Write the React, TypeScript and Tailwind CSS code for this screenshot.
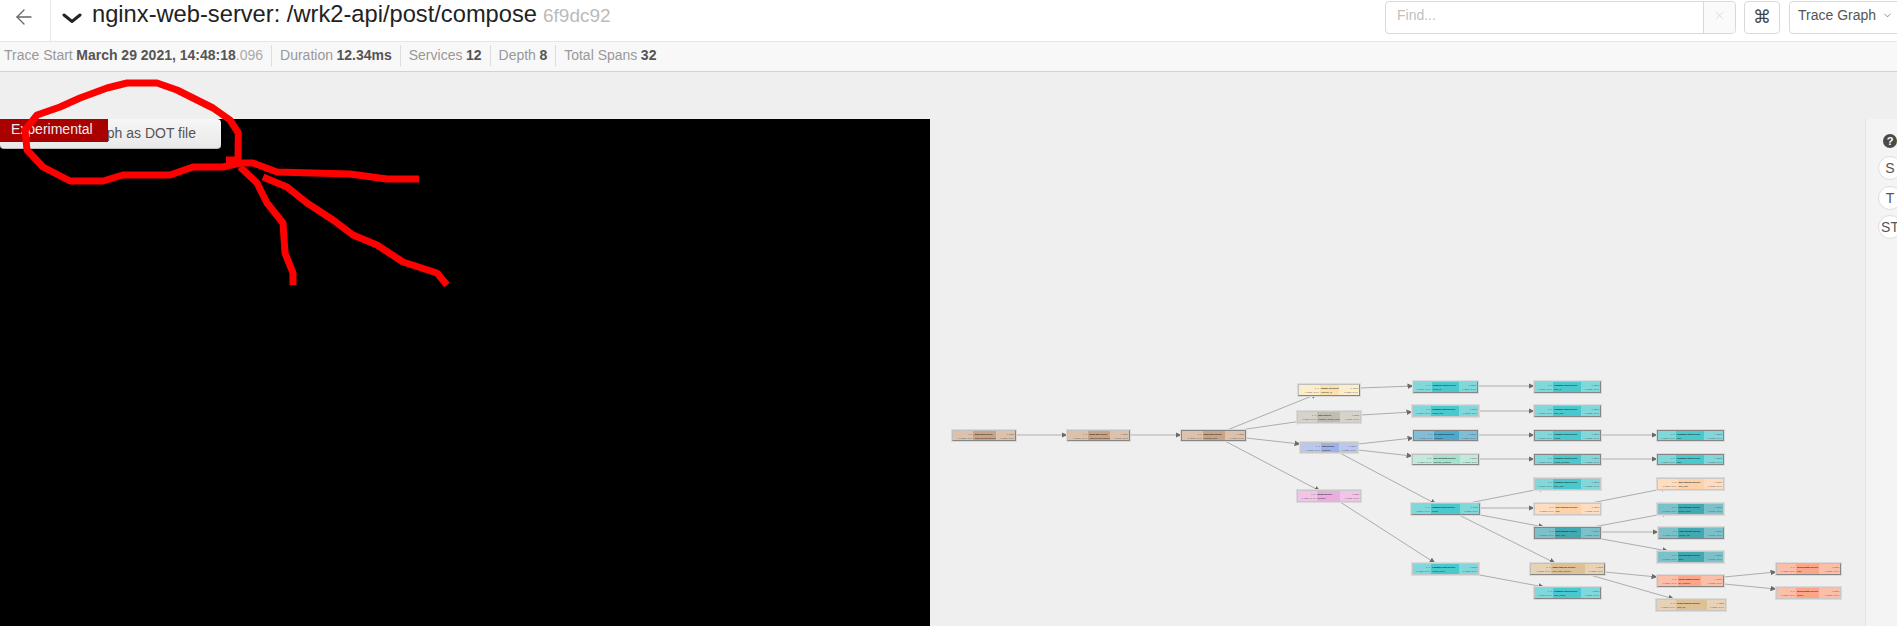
import React from 'react';
import { ArrowLeft, ChevronDown, X } from 'lucide-react';

const CANVAS_X = 930;
const CANVAS_Y = 119;

// tint per service: side cells, middle cell and how the middle cell splits the node
const tints = {
  nginx: { side: 'bg-[#dcc2ac]', mid: 'bg-[#c9a385]', left: 'w-[33%]', right: 'w-[31%]' },
  unique: { side: 'bg-[#fdeecb]', mid: 'bg-[#fde0ae]', left: 'w-[35%]', right: 'w-[34%]' },
  user: { side: 'bg-[#d6d3cb]', mid: 'bg-[#bfbcb0]', left: 'w-[31%]', right: 'w-[32%]' },
  text: { side: 'bg-[#bac8ee]', mid: 'bg-[#9db1e8]', left: 'w-[36%]', right: 'w-[32%]' },
  media: { side: 'bg-[#f1c5e8]', mid: 'bg-[#eaaede]', left: 'w-[30%]', right: 'w-[33%]' },
  compose: { side: 'bg-[#80d8db]', mid: 'bg-[#49c8cd]', left: 'w-[28%]', right: 'w-[29%]' },
  url: { side: 'bg-[#7fbdd9]', mid: 'bg-[#4ba9cd]', left: 'w-[31%]', right: 'w-[29%]' },
  mention: { side: 'bg-[#bfeadc]', mid: 'bg-[#a3e2cc]', left: 'w-[30%]', right: 'w-[28%]' },
  timeline: { side: 'bg-[#fddcc0]', mid: 'bg-[#fdd2a8]', left: 'w-[30%]', right: 'w-[30%]' },
  post: { side: 'bg-[#7cc0c9]', mid: 'bg-[#42a8b2]', left: 'w-[30%]', right: 'w-[29%]' },
  graph: { side: 'bg-[#e8d2b5]', mid: 'bg-[#dec097]', left: 'w-[28%]', right: 'w-[26%]' },
  redis: { side: 'bg-[#fbbea9]', mid: 'bg-[#fba58a]', left: 'w-[30%]', right: 'w-[34%]' },
};

type Tint = keyof typeof tints;
type Tone = 'light' | 'mid' | 'dark';
type Node = { x: number; y: number; w: number; h: number; tint: Tint; name: string; op: string; tone?: Tone };

const tones: Record<Tone, string> = {
  light: 'border-[#c8c8c8]',
  mid: 'border-[#c0c0c0] border-b-[#858585] border-r-[#858585]',
  dark: 'border-[#858585]',
};

const nodes: Node[] = [
  { x: 952, y: 430, w: 64, h: 10, tint: 'nginx', name: 'nginx-web-server', op: '/wrk2-api/post/compose', tone: 'mid' },
  { x: 1067, y: 430, w: 63, h: 10, tint: 'nginx', name: 'nginx-web-server', op: '/wrk2-api/post/compose', tone: 'mid' },
  { x: 1181, y: 430, w: 65, h: 10, tint: 'nginx', name: 'nginx-web-server', op: 'compose_post', tone: 'dark' },
  { x: 1298, y: 384, w: 62, h: 11, tint: 'unique', name: 'unique-id-service', op: 'compose_id', tone: 'mid' },
  { x: 1297, y: 411, w: 64, h: 11, tint: 'user', name: 'user-service', op: 'compose_creator_client' },
  { x: 1300, y: 442, w: 58, h: 10, tint: 'text', name: 'text-service', op: 'compose' },
  { x: 1297, y: 490, w: 64, h: 11, tint: 'media', name: 'media-service', op: 'compose' },
  { x: 1413, y: 381, w: 65, h: 11, tint: 'compose', name: 'compose-post-service', op: 'upload_id', tone: 'mid' },
  { x: 1412, y: 405, w: 67, h: 11, tint: 'compose', name: 'compose-post-service', op: 'upload_user' },
  { x: 1413, y: 430, w: 65, h: 10, tint: 'url', name: 'url-shorten-service', op: 'compose', tone: 'dark' },
  { x: 1412, y: 454, w: 67, h: 10, tint: 'mention', name: 'user-mention-service', op: 'compose_mentions', tone: 'mid' },
  { x: 1534, y: 381, w: 67, h: 11, tint: 'compose', name: 'compose-post-service', op: 'store_id', tone: 'mid' },
  { x: 1534, y: 405, w: 67, h: 11, tint: 'compose', name: 'compose-post-service', op: 'store_user', tone: 'mid' },
  { x: 1534, y: 430, w: 67, h: 10, tint: 'compose', name: 'compose-post-service', op: 'upload', tone: 'dark' },
  { x: 1534, y: 454, w: 67, h: 10, tint: 'compose', name: 'compose-post-service', op: 'upload_mentions', tone: 'dark' },
  { x: 1534, y: 478, w: 67, h: 11, tint: 'compose', name: 'compose-post-service', op: 'store_post' },
  { x: 1657, y: 430, w: 67, h: 10, tint: 'compose', name: 'compose-post-service', op: 'store', tone: 'dark' },
  { x: 1657, y: 454, w: 67, h: 10, tint: 'compose', name: 'compose-post-service', op: 'store', tone: 'dark' },
  { x: 1657, y: 478, w: 67, h: 11, tint: 'timeline', name: 'user-timeline-service', op: 'write_post' },
  { x: 1411, y: 503, w: 69, h: 11, tint: 'compose', name: 'compose-post-service', op: 'upload', tone: 'mid' },
  { x: 1534, y: 503, w: 67, h: 11, tint: 'timeline', name: 'user-timeline-service', op: 'write' },
  { x: 1534, y: 527, w: 67, h: 11, tint: 'post', name: 'post-storage-service', op: 'store_post', tone: 'dark' },
  { x: 1657, y: 503, w: 67, h: 11, tint: 'post', name: 'post-storage-service', op: 'mongo_insert' },
  { x: 1658, y: 527, w: 66, h: 11, tint: 'post', name: 'post-storage-service', op: 'mongo_find', tone: 'mid' },
  { x: 1657, y: 551, w: 67, h: 11, tint: 'post', name: 'post-storage-service', op: 'insert' },
  { x: 1412, y: 563, w: 67, h: 11, tint: 'compose', name: 'compose-post-service', op: 'upload_media' },
  { x: 1530, y: 563, w: 75, h: 11, tint: 'graph', name: 'home-timeline-service', op: 'write_home_timeline', tone: 'mid' },
  { x: 1534, y: 587, w: 67, h: 11, tint: 'compose', name: 'compose-post-service', op: 'store_media', tone: 'mid' },
  { x: 1657, y: 575, w: 67, h: 11, tint: 'redis', name: 'social-graph-service', op: 'get_followers', tone: 'mid' },
  { x: 1656, y: 599, w: 70, h: 11, tint: 'graph', name: 'home-timeline-service', op: 'redis_set' },
  { x: 1776, y: 563, w: 65, h: 11, tint: 'redis', name: 'social-graph-service', op: 'redis', tone: 'mid' },
  { x: 1776, y: 587, w: 65, h: 11, tint: 'redis', name: 'social-graph-service', op: 'mongo' },
];

// x1 y1 x2 y2 in page coordinates, thick ones are the wider pale links
const edges: [number, number, number, number, boolean?][] = [
  [1016, 435, 1067, 435, true],
  [1130, 435, 1181, 435, true],
  [1227, 430, 1317, 394],
  [1240, 430, 1302, 421],
  [1246, 438, 1300, 444],
  [1223, 440, 1320, 491],
  [1360, 388, 1413, 386],
  [1478, 386, 1534, 386],
  [1361, 415, 1412, 412],
  [1479, 411, 1534, 411],
  [1358, 444, 1413, 438],
  [1358, 450, 1412, 456],
  [1478, 435, 1534, 435, true],
  [1601, 435, 1657, 435, true],
  [1479, 459, 1534, 459, true],
  [1601, 459, 1657, 459, true],
  [1338, 452, 1436, 504],
  [1337, 500, 1435, 563],
  [1469, 503, 1545, 488],
  [1480, 508, 1534, 508],
  [1470, 513, 1544, 527],
  [1455, 513, 1555, 563],
  [1591, 503, 1667, 488],
  [1593, 527, 1668, 513],
  [1601, 532, 1658, 532, true],
  [1591, 537, 1668, 551],
  [1469, 573, 1544, 587],
  [1605, 572, 1657, 577],
  [1583, 573, 1674, 599],
  [1724, 577, 1776, 572],
  [1724, 584, 1776, 589],
];

const scribbles = [
  '226,160 238,160 238.3,133 230,120 213,108 197,100 177,90 157,83 127,83 107,88 80,98 60,107 37,115 25,130 27,150 43,167 70,181 103,181 123,175 170,175 193,167 223,167 240,163 253,163 277,172 350,174 387,179 419,179',
  '240,167 257,183 267,203 283,223 285,253 293,273 293,285',
  '263,177 287,187 307,203 333,220 353,235 377,245 403,262 437,273 447,285',
];

const GraphNode = ({ node }: { node: Node }) => {
  const tint = tints[node.tint];
  return (
    <div
      className={`absolute flex overflow-hidden text-[2.2px] leading-[4px] text-[#555] whitespace-nowrap border shadow-[0_0_0_1px_#dadada] ${tones[node.tone ?? 'light']}`}
      style={{ left: node.x - CANVAS_X, top: node.y - CANVAS_Y, width: node.w, height: node.h + 1 }}
    >
      <div className={`${tint.side} ${tint.left} flex flex-col items-end justify-center px-px`}>
        <span>1 / 1</span>
        <span>0.42ms / 3.4%</span>
      </div>
      <div className={`${tint.mid} flex-1 flex flex-col justify-center px-px overflow-hidden text-[#222]`}>
        <span className="font-bold">{node.name}</span>
        <span className="text-[2px]">{node.op}</span>
      </div>
      <div className={`${tint.side} ${tint.right} flex flex-col items-end justify-center px-px`}>
        <span>0.42ms</span>
        <span>0.42ms / 3.4%</span>
      </div>
    </div>
  );
};

const Edges = () => (
  <svg className="absolute inset-0 w-full h-full" viewBox="930 119 935 507">
    <defs>
      <marker id="head" markerWidth="6" markerHeight="6" refX="5.5" refY="3" orient="auto" markerUnits="userSpaceOnUse">
        <path d="M0 0.2 L6 3 L0 5.8 Z" fill="#6b6b6b" />
      </marker>
    </defs>
    {edges.map(([x1, y1, x2, y2, thick], i) => (
      <line
        key={i}
        x1={x1}
        y1={y1}
        x2={x2}
        y2={y2}
        stroke={thick ? '#c4c4c4' : '#acacac'}
        strokeWidth={thick ? 1.5 : 1}
        markerEnd="url(#head)"
      />
    ))}
  </svg>
);

const Stat = ({ label, value, muted, last }: { label: string; value: string; muted?: string; last?: boolean }) => (
  <span className={`flex gap-[3.5px] ${last ? '' : 'border-r border-[#ddd] pr-[8px] mr-[8px]'}`}>
    <span className="text-[#999]">{label}</span>
    <span className="font-bold text-[#555]">
      {value}
      {muted && <span className="font-normal text-[#aaa]">{muted}</span>}
    </span>
  </span>
);

export default function App() {
  return (
    <div className="relative h-[626px] w-full overflow-hidden flex flex-col bg-[#efefef] font-['Liberation_Sans',sans-serif]">
      <header className="h-[42px] shrink-0 bg-white border-b border-[#e6e6e6] flex">
        <div className="w-[51px] border-r border-[#e6e6e6] flex justify-center pt-[5px] pr-[3px]">
          <ArrowLeft size={24} strokeWidth={1.3} className="text-[#666]" />
        </div>
        <svg className="ml-[11px] mt-[13px]" width="20" height="10" viewBox="0 0 20 10">
          <path d="M2 2 L10 8.5 L18 2" fill="none" stroke="#222" strokeWidth="3" strokeLinecap="round" />
        </svg>
        <div className="ml-[10px] flex items-baseline gap-[6px] h-[28px]">
          <span className="text-[23.7px] leading-[28px] text-[#222]">nginx-web-server: /wrk2-api/post/compose</span>
          <span className="text-[19px] text-[#bbb]">6f9dc92</span>
        </div>
        <div className="ml-auto flex gap-[8px] pt-px h-[34px]">
          <div className="flex w-[351px] border border-[#d9d9d9] rounded-[4px] text-[14px]">
            <span className="flex-1 px-[11px] leading-[26px] text-[#bfbfbf] border-r border-[#d9d9d9]">Find...</span>
            <span className="w-[31px] bg-[#fafafa] flex items-center justify-center rounded-r-[4px] pb-[4px]">
              <X size={13} strokeWidth={1.2} className="text-[#ccc]" />
            </span>
          </div>
          <div className="w-[36px] mr-px pb-[3px] border border-[#d9d9d9] rounded-[4px] flex items-center justify-center text-[18px] text-[#444] font-['DejaVu_Sans',sans-serif]">
            ⌘
          </div>
          <div className="w-[116px] -mr-[8px] pb-[4px] border border-[#d9d9d9] rounded-[4px] flex items-center pl-[8px] gap-[6px] text-[14px] text-[#555]">
            Trace Graph
            <ChevronDown size={11} strokeWidth={1.4} />
          </div>
        </div>
      </header>

      <div className="h-[30px] shrink-0 bg-[#f8f8f8] border-b border-[#d2d2d2] flex items-center pl-[4px] pb-[2px] text-[14px]">
        <Stat label="Trace Start" value="March 29 2021, 14:48:18" muted=".096" />
        <Stat label="Duration" value="12.34ms" />
        <Stat label="Services" value="12" />
        <Stat label="Depth" value="8" />
        <Stat label="Total Spans" value="32" last />
      </div>

      <div className="h-[47px] shrink-0" />

      <main className="flex-1 flex min-h-0">
        <section className="relative w-[930px] shrink-0 bg-black">
          <button className="w-[221px] h-[30px] rounded-b-[4px] rounded-tr-[4px] border-b border-[#bbb] bg-gradient-to-b from-[#f6f6f6] to-[#e9e9e9] text-[14px] text-[#555] text-right pr-[25px]">
            Export Graph as DOT file
          </button>
          <div className="absolute left-0 top-0 w-[108px] h-[23px] bg-[#a90000] text-[14px] leading-[20px] text-[#eee] pl-[11px]">
            Experimental
          </div>
        </section>

        <section className="relative flex-1">
          <Edges />
          {nodes.map((node, i) => (
            <GraphNode key={i} node={node} />
          ))}
        </section>

        <aside className="w-[32px] shrink-0 bg-[#f4f4f4] border-l border-[#e4e4e4] pt-[15px] pl-[12px] flex flex-col items-start">
          <span className="w-[14px] h-[14px] ml-[5px] rounded-full bg-[#4a4a4a] text-white text-[11px] leading-[14px] text-center font-bold">?</span>
          <div className="mt-[8px] flex flex-col gap-[5.5px]">
            {['S', 'T', 'ST'].map(label => (
              <span
                key={label}
                className="w-[24px] h-[24px] rounded-full bg-white border border-[#ddd] text-[14px] leading-[22px] text-center text-[#555]"
              >
                {label}
              </span>
            ))}
          </div>
        </aside>
      </main>

      <svg className="absolute inset-0 w-full h-full pointer-events-none" viewBox="0 0 1897 626">
        {scribbles.map((points, i) => (
          <polyline key={i} points={points} fill="none" stroke="#ff0000" strokeWidth="7" strokeLinejoin="round" />
        ))}
      </svg>
    </div>
  );
}
